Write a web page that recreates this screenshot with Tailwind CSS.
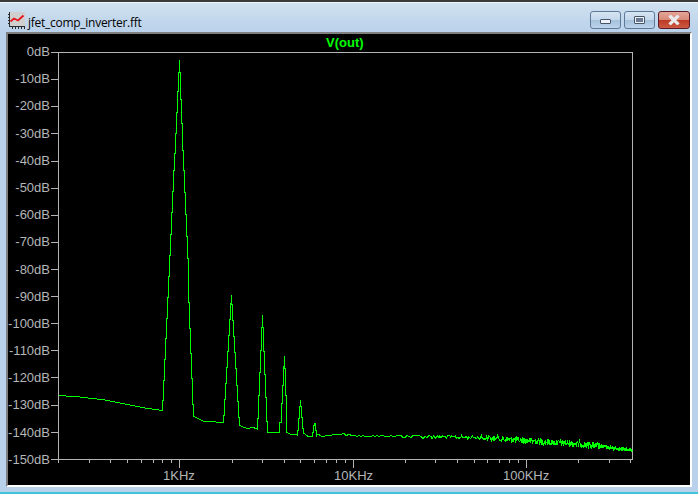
<!DOCTYPE html>
<html>
<head>
<meta charset="utf-8">
<script src="https://cdn.jsdelivr.net/npm/@tailwindcss/browser@4"></script>
</head>
<body class="m-0 bg-[#b9d1ea]">
<div class="w-[698px] h-[494px] flex flex-col overflow-hidden bg-[#b9d1ea] font-['Liberation_Sans',sans-serif]">
  <div class="h-[2px] bg-[#3a3a3a] shrink-0"></div>
  <div class="h-[30px] shrink-0 flex items-start pl-[8px] pr-[8px] border-t border-t-white/80 bg-gradient-to-b from-[#d0e1f0] to-[#b9d1ea]">
    <svg class="w-[17px] h-[17px] shrink-0 mt-[9px]" viewBox="0 0 17 17" shape-rendering="crispEdges">
      <rect x="2" y="0" width="15" height="14" fill="#cfcfcf"/>
      <path d="M1.5 0v15M1 14.5h16" stroke="#2a2a2a" fill="none"/>
      <path d="M0 2h2M0 5h2M0 8h2M0 11h2M4 15v2M7 15v2M10 15v2M13 15v2M16 15v2" stroke="#2a2a2a" fill="none"/>
      <path d="M2.5 9.5L6 6.5l4 2L15.5 3.5" stroke="#e8141c" stroke-width="1.8" fill="none" shape-rendering="auto"/>
    </svg>
    <span class="ml-[3px] mt-[12px] text-[12px] leading-[16px] tracking-[-0.27px] text-black font-['Open_Sans',sans-serif]">jfet_comp_inverter.fft</span>
    <div class="ml-auto flex gap-[3px] h-[18px] mt-[8px]">
      <div class="w-[31px] flex items-center justify-center rounded-[3px] border border-[#5f7a98] bg-[linear-gradient(#d6e4f2_0%,#c4d8ec_48%,#a6c1dc_52%,#bcd3ea_100%)]">
        <div class="w-[11px] h-[5px] bg-[#eef2f6] border border-[#46546a] rounded-[1px] mt-[3px]"></div>
      </div>
      <div class="w-[31px] flex items-center justify-center rounded-[3px] border border-[#5f7a98] bg-[linear-gradient(#d6e4f2_0%,#c4d8ec_48%,#a6c1dc_52%,#bcd3ea_100%)]">
        <div class="w-[11px] h-[8px] bg-[#eef2f6] border border-[#46546a] rounded-[1px] flex items-center justify-center"><div class="w-[7px] h-[4px] bg-[#6a7a92]"></div></div>
      </div>
      <div class="w-[32px] flex items-center justify-center rounded-[3px] border border-[#5a1a2a] bg-[linear-gradient(#e2a698_0%,#d88a78_48%,#bc3a26_52%,#cc5a42_100%)]">
        <svg class="w-[12px] h-[10px]" viewBox="0 0 12 10"><path d="M1.5 .5l9 9M10.5 .5l-9 9" stroke="#e8eaec" stroke-width="3.2" fill="none"/></svg>
      </div>
    </div>
  </div>
  <div class="mx-[6px] h-[455px] shrink-0 bg-black border-l-[2px] border-t-[2px] border-r-[2px] border-b-[2px] border-l-[#7f7f7f] border-t-[#7f7f7f] border-r-white border-b-white flex relative text-[13px] text-[#b4b6b8]">
    <div class="w-[42px] shrink-0 h-[423px] mt-[10px] flex flex-col justify-between items-end leading-[15px]">
      <span>0dB</span><span>-10dB</span><span>-20dB</span><span>-30dB</span><span>-40dB</span><span>-50dB</span><span>-60dB</span><span>-70dB</span><span>-80dB</span><span>-90dB</span><span>-100dB</span><span>-110dB</span><span>-120dB</span><span>-130dB</span><span>-140dB</span><span>-150dB</span>
    </div>
    <div class="flex-1 flex flex-col relative">
      <span class="absolute left-[276px] top-[1px] font-bold text-[#00ff00] leading-[15px]">V(out)</span>
      <svg class="absolute left-[1px] top-[18px]" width="582" height="416" viewBox="51 52 582 416" shape-rendering="crispEdges">
        <g fill="none" stroke="#b4b4b4" stroke-width="1">
          <path d="M58.5 52.5H632.5V459.5H58.5Z"/>
          <path d="M51 52.5h7M51 79.5h7M51 106.5h7M51 133.5h7M51 161.5h7M51 188.5h7M51 215.5h7M51 242.5h7M51 269.5h7M51 296.5h7M51 323.5h7M51 350.5h7M51 377.5h7M51 405.5h7M51 432.5h7M51 459.5h7"/>
          <path d="M58.5 460v3M89.5 460v3M110.5 460v3M127.5 460v3M141.5 460v3M153.5 460v3M162.5 460v3M171.5 460v3M232.5 460v3M262.5 460v3M284.5 460v3M300.5 460v3M314.5 460v3M326.5 460v3M336.5 460v3M345.5 460v3M405.5 460v3M435.5 460v3M457.5 460v3M474.5 460v3M487.5 460v3M499.5 460v3M509.5 460v3M518.5 460v3M578.5 460v3M609.5 460v3M630.5 460v3"/>
          <path d="M179.5 460v8M353.5 460v8M526.5 460v8"/>
        </g>
        <path fill="none" stroke="#00ff00" stroke-width="1" d="M59 395.5L80 397 105 400 125 404 145 408 162.5 410.5V400H163.5V380H164.5V359H165.5V338H166.5V318H167.5V297H168.5V276H169.5V255H170.5V234H171.5V212H172.5V191H173.5V170H174.5V153H175.5V133H176.5V112H177.5V91H178.5V72H179.5V60V72H180.5V99H181.5V123H182.5V150H183.5V170H184.5V192H185.5V214H186.5V236H187.5V258H188.5V302H189.5V328H190.5V353H191.5V378H192.5V404H193.5V416L197 418 200 419.5 204 421.5H211L220 422.5H223.5V415H224.5V399H225.5V383H226.5V367H227.5V351H228.5V335H229.5V319H230.5V303H231.5V295V304H232.5V320H233.5V336H234.5V352H235.5V368H236.5V385H237.5V401H238.5V417H239.5V425L243 427 246 428H250L253 427.5 257.5 429V418H258.5V395H259.5V372H260.5V350H261.5V327H262.5V315V327H263.5V351H264.5V374H265.5V397H266.5V421H267.5V432.5H279.5V422H281.5V403H282.5V385H283.5V366H284.5V356V368H285.5V395H286.5V432L288 433 291 434.5 294 434 297.5 435V430H298.5V418H299.5V406H300.5V400V406H301.5V417H302.5V428H303.5V433L306 435 309 437 312.5 436V432H313.5V425H314.5V423H315.5V430H316.5V436L318 434 321 436 324 436.5 327 435H332L337 434.5 340 435 344 433 346 436 349 434"/>
        <path id="noise" fill="none" stroke="#00ff00" stroke-width="1" d="M349 434"/>
      </svg>
      <span class="absolute left-[113px] top-[434px] leading-[15px]">1KHz</span>
      <span class="absolute left-[284px] top-[434px] leading-[15px]">10KHz</span>
      <span class="absolute left-[453px] top-[434px] leading-[15px]">100KHz</span>
    </div>
  </div>
  <div class="flex-1"></div>
  <div class="h-[2px] bg-[#3fc4d8] shrink-0"></div>
</div>
<script>
  var seed = 12345;
  function rnd() { seed = (seed * 1103515245 + 12345) & 2147483647; return seed / 2147483647; }
  var anchors = [[349,435],[420,436],[480,437],[547,441.5],[580,443.5],[613,447.5],[632,449.5]];
  function base(x) {
    for (var i = 0; i < anchors.length - 1; i++) {
      var a = anchors[i], b = anchors[i + 1];
      if (x <= b[0]) return a[1] + (b[1] - a[1]) * (x - a[0]) / (b[0] - a[0]);
    }
    return 449.5;
  }
  var d = "M349 434", x = 349;
  while (x < 632) {
    var step = x < 430 ? 2 : x < 500 ? 0.9 : x < 590 ? 0.4 : 0.3;
    var amp = x < 400 ? 1 : x < 480 ? 2 : x < 600 ? 3 : 1.6;
    x += step;
    var y = base(x) + (rnd() - 0.5) * 2 * amp;
    d += "L" + x.toFixed(1) + " " + (Math.round(y) + 0.5);
  }
  document.getElementById("noise").setAttribute("d", d);
</script>
</body>
</html>
